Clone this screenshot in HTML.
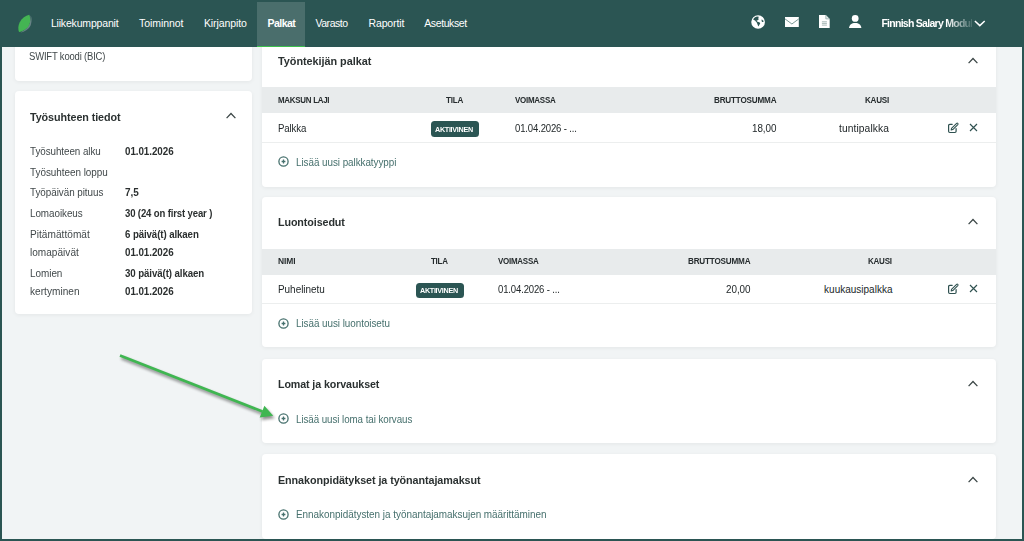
<!DOCTYPE html>
<html><head><meta charset="utf-8"><style>
*{margin:0;padding:0;box-sizing:border-box}
html,body{width:1024px;height:541px;overflow:hidden;background:#f1f4f5;font-family:"Liberation Sans", sans-serif}
.a{position:absolute}
.t{position:absolute;white-space:pre;line-height:normal;font-family:"Liberation Sans", sans-serif}
.card{position:absolute;background:#fff;border-radius:4px;box-shadow:0 1px 4px rgba(0,0,0,0.06)}
.band{position:absolute;background:#e8ebec}
.line{position:absolute;height:1px;background:#eceeee}
.badge{position:absolute;background:#2b5553;border-radius:3.5px}
</style></head><body>
<div class="card" style="left:15px;top:20px;width:237px;height:60.5px"></div>
<div class="card" style="left:15px;top:91.3px;width:237px;height:223px"></div>
<div class="card" style="left:262px;top:36px;width:733.6px;height:150.5px"></div>
<div class="band" style="left:262px;top:87px;width:733.6px;height:26.4px"></div>
<div class="line" style="left:262px;top:142px;width:733.6px"></div>
<div class="badge" style="left:430.5px;top:121.4px;width:48.4px;height:15.5px"></div>
<div class="card" style="left:262px;top:196.8px;width:733.6px;height:150.5px"></div>
<div class="band" style="left:262px;top:248.5px;width:733.6px;height:26.4px"></div>
<div class="line" style="left:262px;top:303px;width:733.6px"></div>
<div class="badge" style="left:415.5px;top:282.6px;width:48.4px;height:15.5px"></div>
<div class="card" style="left:262px;top:358.6px;width:733.6px;height:84.5px"></div>
<div class="card" style="left:262px;top:454.4px;width:733.6px;height:84.2px"></div>
<div class="a" id="hdr" style="left:0;top:0;width:1024px;height:47px;background:#2b5553"></div>
<div class="a" style="left:257px;top:2px;width:48px;height:45px;background:rgba(255,255,255,0.15)"></div>
<div class="a" style="left:257px;top:46px;width:48px;height:1px;background:#3cbf4e"></div>
<svg class="a" style="left:16px;top:13px" width="20" height="21" viewBox="0 0 20 21"><defs><filter id="lf"><feGaussianBlur stdDeviation="0.6"/></filter></defs><path d="M14.6 2.6 C15.8 4.4 16 9 14.6 12.4 C12.6 16.4 8.4 18.8 4.6 19.4 C9 17 12.4 14 13.6 10.4 C14.4 7.8 14.6 5 14.6 2.6 Z" fill="#9aa8b0" opacity="0.55" filter="url(#lf)"/><path d="M13.2 1.8 C14.4 3.6 14.6 8.6 13.2 12 C11.2 16 6.8 18.4 3 19 C2 16.4 2 12.6 3.6 9.4 C5.8 5.2 9.6 2.6 13.2 1.8 Z" fill="#44b553"/></svg>
<span class="t" style="left:50.88px;top:16.99px;font-size:10.5px;font-weight:400;color:#ffffff;letter-spacing:-0.170px">Liikekumppanit</span>
<span class="t" style="left:139.08px;top:16.99px;font-size:10.5px;font-weight:400;color:#ffffff;letter-spacing:-0.077px">Toiminnot</span>
<span class="t" style="left:203.88px;top:16.99px;font-size:10.5px;font-weight:400;color:#ffffff;letter-spacing:-0.082px">Kirjanpito</span>
<span class="t" style="left:267.38px;top:16.99px;font-size:10.5px;font-weight:700;color:#ffffff;letter-spacing:-0.499px">Palkat</span>
<span class="t" style="left:315.38px;top:16.99px;font-size:10.5px;font-weight:400;color:#ffffff;letter-spacing:-0.430px">Varasto</span>
<span class="t" style="left:368.48px;top:16.99px;font-size:10.5px;font-weight:400;color:#ffffff;letter-spacing:-0.132px">Raportit</span>
<span class="t" style="left:424.28px;top:16.99px;font-size:10.5px;font-weight:400;color:#ffffff;letter-spacing:-0.409px">Asetukset</span>
<span class="t" style="left:29.40px;top:51.25px;font-size:10px;font-weight:400;color:#41484a;letter-spacing:-0.193px;transform:scaleX(0.9475);transform-origin:0 0">SWIFT koodi (BIC)</span>
<span class="t" style="left:29.56px;top:110.84px;font-size:11px;font-weight:700;color:#2b3131;letter-spacing:-0.085px;transform:scaleX(0.9787);transform-origin:0 0">Työsuhteen tiedot</span>
<span class="t" style="left:29.60px;top:146.45px;font-size:10px;font-weight:400;color:#41484a;letter-spacing:-0.059px;transform:scaleX(0.9833);transform-origin:0 0">Työsuhteen alku</span>
<span class="t" style="left:124.60px;top:146.45px;font-size:10px;font-weight:700;color:#2b2f2f;letter-spacing:-0.066px;transform:scaleX(0.9825);transform-origin:0 0">01.01.2026</span>
<span class="t" style="left:29.60px;top:166.95px;font-size:10px;font-weight:400;color:#41484a;letter-spacing:-0.031px;transform:scaleX(0.9912);transform-origin:0 0">Työsuhteen loppu</span>
<span class="t" style="left:29.60px;top:187.15px;font-size:10px;font-weight:400;color:#41484a;letter-spacing:-0.045px;transform:scaleX(0.9867);transform-origin:0 0">Työpäivän pituus</span>
<span class="t" style="left:124.60px;top:187.15px;font-size:10px;font-weight:700;color:#2b2f2f;letter-spacing:-0.021px;transform:scaleX(0.9954);transform-origin:0 0">7,5</span>
<span class="t" style="left:29.60px;top:207.75px;font-size:10px;font-weight:400;color:#41484a;letter-spacing:-0.055px;transform:scaleX(0.9864);transform-origin:0 0">Lomaoikeus</span>
<span class="t" style="left:124.60px;top:207.75px;font-size:10px;font-weight:700;color:#2b2f2f;letter-spacing:-0.141px;transform:scaleX(0.9550);transform-origin:0 0">30 (24 on first year )</span>
<span class="t" style="left:29.60px;top:228.95px;font-size:10px;font-weight:400;color:#41484a;letter-spacing:0.032px;transform:scaleX(1.0089);transform-origin:0 0">Pitämättömät</span>
<span class="t" style="left:124.60px;top:228.95px;font-size:10px;font-weight:700;color:#2b2f2f;letter-spacing:-0.104px;transform:scaleX(0.9691);transform-origin:0 0">6 päivä(t) alkaen</span>
<span class="t" style="left:29.60px;top:246.85px;font-size:10px;font-weight:400;color:#41484a;letter-spacing:0.019px;transform:scaleX(1.0055);transform-origin:0 0">lomapäivät</span>
<span class="t" style="left:124.60px;top:246.85px;font-size:10px;font-weight:700;color:#2b2f2f;letter-spacing:-0.066px;transform:scaleX(0.9825);transform-origin:0 0">01.01.2026</span>
<span class="t" style="left:29.60px;top:267.55px;font-size:10px;font-weight:400;color:#41484a;letter-spacing:-0.033px;transform:scaleX(0.9925);transform-origin:0 0">Lomien</span>
<span class="t" style="left:124.60px;top:267.55px;font-size:10px;font-weight:700;color:#2b2f2f;letter-spacing:-0.099px;transform:scaleX(0.9707);transform-origin:0 0">30 päivä(t) alkaen</span>
<span class="t" style="left:29.60px;top:285.55px;font-size:10px;font-weight:400;color:#41484a;letter-spacing:0.031px;transform:scaleX(1.0085);transform-origin:0 0">kertyminen</span>
<span class="t" style="left:124.60px;top:285.55px;font-size:10px;font-weight:700;color:#2b2f2f;letter-spacing:-0.066px;transform:scaleX(0.9825);transform-origin:0 0">01.01.2026</span>
<span class="t" style="left:277.56px;top:55.34px;font-size:11px;font-weight:700;color:#2b3131;letter-spacing:-0.045px;transform:scaleX(0.9882);transform-origin:0 0">Työntekijän palkat</span>
<span class="t" style="left:277.66px;top:94.90px;font-size:8.5px;font-weight:700;color:#262c2e;letter-spacing:-0.279px;transform:scaleX(0.9327);transform-origin:0 0">MAKSUN LAJI</span>
<span class="t" style="left:446.06px;top:94.90px;font-size:8.5px;font-weight:700;color:#262c2e;letter-spacing:-0.212px;transform:scaleX(0.9520);transform-origin:0 0">TILA</span>
<span class="t" style="left:514.56px;top:94.90px;font-size:8.5px;font-weight:700;color:#262c2e;letter-spacing:-0.278px;transform:scaleX(0.9396);transform-origin:0 0">VOIMASSA</span>
<span class="t" style="left:713.86px;top:94.90px;font-size:8.5px;font-weight:700;color:#262c2e;letter-spacing:-0.200px;transform:scaleX(0.9573);transform-origin:0 0">BRUTTOSUMMA</span>
<span class="t" style="left:864.66px;top:94.90px;font-size:8.5px;font-weight:700;color:#262c2e;letter-spacing:-0.229px;transform:scaleX(0.9507);transform-origin:0 0">KAUSI</span>
<span class="t" style="left:277.60px;top:122.95px;font-size:10px;font-weight:400;color:#22282a;letter-spacing:-0.142px;transform:scaleX(0.9657);transform-origin:0 0">Palkka</span>
<span class="t" style="left:435.48px;top:124.66px;font-size:8px;font-weight:700;color:#ffffff;letter-spacing:-0.354px;transform:scaleX(0.9047);transform-origin:0 0">AKTIIVINEN</span>
<span class="t" style="left:514.50px;top:122.95px;font-size:10px;font-weight:400;color:#22282a;letter-spacing:-0.148px;transform:scaleX(0.9529);transform-origin:0 0">01.04.2026 - ...</span>
<span class="t" style="left:752.10px;top:122.95px;font-size:10px;font-weight:400;color:#22282a;letter-spacing:-0.064px;transform:scaleX(0.9849);transform-origin:0 0">18,00</span>
<span class="t" style="left:839.10px;top:122.95px;font-size:10px;font-weight:400;color:#22282a;letter-spacing:0.081px;transform:scaleX(1.0262);transform-origin:0 0">tuntipalkka</span>
<span class="t" style="left:295.60px;top:156.75px;font-size:10px;font-weight:400;color:#46706d;letter-spacing:-0.045px;transform:scaleX(0.9857);transform-origin:0 0">Lisää uusi palkkatyyppi</span>
<span class="t" style="left:277.56px;top:216.34px;font-size:11px;font-weight:700;color:#2b3131;letter-spacing:-0.103px;transform:scaleX(0.9761);transform-origin:0 0">Luontoisedut</span>
<span class="t" style="left:277.66px;top:255.90px;font-size:8.5px;font-weight:700;color:#262c2e;letter-spacing:-0.037px;transform:scaleX(0.9909);transform-origin:0 0">NIMI</span>
<span class="t" style="left:431.36px;top:255.90px;font-size:8.5px;font-weight:700;color:#262c2e;letter-spacing:-0.286px;transform:scaleX(0.9361);transform-origin:0 0">TILA</span>
<span class="t" style="left:497.56px;top:255.90px;font-size:8.5px;font-weight:700;color:#262c2e;letter-spacing:-0.278px;transform:scaleX(0.9396);transform-origin:0 0">VOIMASSA</span>
<span class="t" style="left:687.66px;top:255.90px;font-size:8.5px;font-weight:700;color:#262c2e;letter-spacing:-0.200px;transform:scaleX(0.9573);transform-origin:0 0">BRUTTOSUMMA</span>
<span class="t" style="left:868.36px;top:255.90px;font-size:8.5px;font-weight:700;color:#262c2e;letter-spacing:-0.262px;transform:scaleX(0.9439);transform-origin:0 0">KAUSI</span>
<span class="t" style="left:277.60px;top:283.95px;font-size:10px;font-weight:400;color:#22282a;letter-spacing:-0.021px;transform:scaleX(0.9941);transform-origin:0 0">Puhelinetu</span>
<span class="t" style="left:420.48px;top:285.66px;font-size:8px;font-weight:700;color:#ffffff;letter-spacing:-0.354px;transform:scaleX(0.9047);transform-origin:0 0">AKTIIVINEN</span>
<span class="t" style="left:497.50px;top:283.95px;font-size:10px;font-weight:400;color:#22282a;letter-spacing:-0.148px;transform:scaleX(0.9529);transform-origin:0 0">01.04.2026 - ...</span>
<span class="t" style="left:725.80px;top:283.95px;font-size:10px;font-weight:400;color:#22282a;letter-spacing:-0.054px;transform:scaleX(0.9873);transform-origin:0 0">20,00</span>
<span class="t" style="left:824.10px;top:283.95px;font-size:10px;font-weight:400;color:#22282a;letter-spacing:-0.002px">kuukausipalkka</span>
<span class="t" style="left:295.60px;top:317.75px;font-size:10px;font-weight:400;color:#46706d;letter-spacing:-0.042px;transform:scaleX(0.9864);transform-origin:0 0">Lisää uusi luontoisetu</span>
<span class="t" style="left:277.56px;top:377.64px;font-size:11px;font-weight:700;color:#2b3131;letter-spacing:-0.114px;transform:scaleX(0.9718);transform-origin:0 0">Lomat ja korvaukset</span>
<span class="t" style="left:295.60px;top:413.55px;font-size:10px;font-weight:400;color:#46706d;letter-spacing:-0.068px;transform:scaleX(0.9785);transform-origin:0 0">Lisää uusi loma tai korvaus</span>
<span class="t" style="left:277.56px;top:473.64px;font-size:11px;font-weight:700;color:#2b3131;letter-spacing:-0.080px;transform:scaleX(0.9797);transform-origin:0 0">Ennakonpidätykset ja työnantajamaksut</span>
<span class="t" style="left:295.60px;top:508.95px;font-size:10px;font-weight:400;color:#46706d;letter-spacing:-0.023px;transform:scaleX(0.9929);transform-origin:0 0">Ennakonpidätysten ja työnantajamaksujen määrittäminen</span>
<span class="t" style="left:881.38px;top:16.79px;font-size:10.5px;font-weight:700;color:#ffffff;letter-spacing:-0.725px;-webkit-mask-image:linear-gradient(90deg,#000 0,#000 72%,rgba(0,0,0,0.15) 100%)">Finnish Salary Modul</span>
<svg class="a" style="left:225.0px;top:111.7px" width="12" height="7.5" viewBox="-1 -1 12 7.5"><path d="M0.6 5.1 L5.0 0.5 L9.4 5.1" fill="none" stroke="#3a4545" stroke-width="1.25"/></svg>
<svg class="a" style="left:966.6px;top:57.1px" width="12" height="7.5" viewBox="-1 -1 12 7.5"><path d="M0.6 5.1 L5.0 0.5 L9.4 5.1" fill="none" stroke="#3a4545" stroke-width="1.25"/></svg>
<svg class="a" style="left:966.6px;top:218.3px" width="12" height="7.5" viewBox="-1 -1 12 7.5"><path d="M0.6 5.1 L5.0 0.5 L9.4 5.1" fill="none" stroke="#3a4545" stroke-width="1.25"/></svg>
<svg class="a" style="left:966.6px;top:380.1px" width="12" height="7.5" viewBox="-1 -1 12 7.5"><path d="M0.6 5.1 L5.0 0.5 L9.4 5.1" fill="none" stroke="#3a4545" stroke-width="1.25"/></svg>
<svg class="a" style="left:966.6px;top:475.8px" width="12" height="7.5" viewBox="-1 -1 12 7.5"><path d="M0.6 5.1 L5.0 0.5 L9.4 5.1" fill="none" stroke="#3a4545" stroke-width="1.25"/></svg>
<svg class="a" style="left:277.1px;top:155.45px" width="13" height="13" viewBox="0 0 13 13"><circle cx="6.5" cy="6.5" r="4.6" fill="none" stroke="#46706d" stroke-width="1.3"/><path d="M6.5 4.6V8.4M4.6 6.5H8.4" stroke="#46706d" stroke-width="1.3"/></svg>
<svg class="a" style="left:277.1px;top:316.95px" width="13" height="13" viewBox="0 0 13 13"><circle cx="6.5" cy="6.5" r="4.6" fill="none" stroke="#46706d" stroke-width="1.3"/><path d="M6.5 4.6V8.4M4.6 6.5H8.4" stroke="#46706d" stroke-width="1.3"/></svg>
<svg class="a" style="left:277.1px;top:412.35px" width="13" height="13" viewBox="0 0 13 13"><circle cx="6.5" cy="6.5" r="4.6" fill="none" stroke="#46706d" stroke-width="1.3"/><path d="M6.5 4.6V8.4M4.6 6.5H8.4" stroke="#46706d" stroke-width="1.3"/></svg>
<svg class="a" style="left:277.1px;top:507.55px" width="13" height="13" viewBox="0 0 13 13"><circle cx="6.5" cy="6.5" r="4.6" fill="none" stroke="#46706d" stroke-width="1.3"/><path d="M6.5 4.6V8.4M4.6 6.5H8.4" stroke="#46706d" stroke-width="1.3"/></svg>
<svg class="a" style="left:947px;top:122.2px" width="12" height="12" viewBox="0 0 12 12"><path d="M5.2 2.3H2.8Q1.6 2.3 1.6 3.5V9.3Q1.6 10.5 2.8 10.5H7.9Q9.1 10.5 9.1 9.3V6.6" fill="none" stroke="#2f5150" stroke-width="1.2" stroke-linecap="round"/><path d="M4.2 8 L4.5 6.4 L9.6 1.3 Q10.2 0.8 10.8 1.4 Q11.3 2 10.8 2.6 L5.8 7.6 Z" fill="none" stroke="#2f5150" stroke-width="1.05" stroke-linejoin="round"/></svg>
<svg class="a" style="left:968.8px;top:122.8px" width="9" height="9" viewBox="0 0 9 9"><path d="M1 1L8 8M8 1L1 8" stroke="#2f5150" stroke-width="1.15"/></svg>
<svg class="a" style="left:947px;top:283.2px" width="12" height="12" viewBox="0 0 12 12"><path d="M5.2 2.3H2.8Q1.6 2.3 1.6 3.5V9.3Q1.6 10.5 2.8 10.5H7.9Q9.1 10.5 9.1 9.3V6.6" fill="none" stroke="#2f5150" stroke-width="1.2" stroke-linecap="round"/><path d="M4.2 8 L4.5 6.4 L9.6 1.3 Q10.2 0.8 10.8 1.4 Q11.3 2 10.8 2.6 L5.8 7.6 Z" fill="none" stroke="#2f5150" stroke-width="1.05" stroke-linejoin="round"/></svg>
<svg class="a" style="left:968.8px;top:283.8px" width="9" height="9" viewBox="0 0 9 9"><path d="M1 1L8 8M8 1L1 8" stroke="#2f5150" stroke-width="1.15"/></svg>

<svg class="a" style="left:751.2px;top:14.5px" width="14.2" height="14" viewBox="0 0 14.2 14"><circle cx="7.1" cy="7" r="6.85" fill="#fff"/><path d="M2.2 4.9 C2.4 3.1 4 1.6 6 1.4 L7.8 1.8 C7.4 2.8 7.1 3.6 7.7 4.4 C7.1 5 6.3 5.4 5.5 5.7 C5.6 6.2 6.4 6.6 7.4 6.9 C8.4 7.1 9.1 7.6 9.2 8.2 C8.8 9.4 7.9 10.4 7.3 11.4 C6.7 10 6.2 8.8 5.8 7.6 C5.2 7.2 4.6 6.6 4.4 5.8 C3.8 5.6 3.2 5.3 2.6 4.8 Z M10.6 4.4 C11.6 4.8 12.4 5.6 12.7 6.6 C12.1 7.3 11.2 7.1 10.8 6.4 C10.6 5.8 10.5 5 10.6 4.4 Z" fill="#2b5553"/></svg>
<svg class="a" style="left:785.4px;top:16.7px" width="13.8" height="10" viewBox="0 0 13.8 10"><rect x="0" y="0" width="13.8" height="10" fill="#fff"/><path d="M0 1.9 L6.9 7 L13.8 1.9" fill="none" stroke="#6d8e8c" stroke-width="0.9"/></svg>
<svg class="a" style="left:818.9px;top:15px" width="10.7" height="13.3" viewBox="0 0 10.7 13.3"><path d="M0 0H6.8L10.7 3.9V13.3H0Z" fill="#fff"/><path d="M6.8 0.2V3.9H10.5" fill="#dfe7e7"/><path d="M6.8 0V3.9H10.7" fill="none" stroke="#7f9a99" stroke-width="0.6"/><path d="M2.9 6.8H7.9M2.9 8.4H7.9M2.9 10.1H7.9" stroke="#9db0af" stroke-width="0.9"/></svg>
<svg class="a" style="left:849.2px;top:14.6px" width="12.4" height="13.6" viewBox="0 0 12.4 13.6"><circle cx="6.2" cy="3.4" r="3.4" fill="#fff"/><path d="M0 13.6 C0 10.2 2.4 8 6.2 8 C10 8 12.4 10.2 12.4 13.6 Z" fill="#fff"/></svg>
<svg class="a" style="left:974px;top:19.5px" width="11.6" height="7" viewBox="0 0 11.6 7"><path d="M0.9 1 L5.8 5.6 L10.7 1" fill="none" stroke="#fff" stroke-width="1.5"/></svg>


<svg class="a" style="left:100px;top:340px" width="190" height="95" viewBox="100 340 190 95">
<defs><filter id="sh" x="-20%" y="-40%" width="140%" height="180%"><feGaussianBlur stdDeviation="1.6"/></filter></defs>
<g transform="translate(1.5,2.5)" filter="url(#sh)" opacity="0.45"><path d="M120 355.4 L262.5 411.5" stroke="#000" stroke-width="2.8"/><path d="M273.2 415.8 L264.4 405.8 L259.7 417.4 Z" fill="#000"/></g>
<path d="M120 355.4 L262.5 411.5" stroke="#3fb651" stroke-width="2.7"/><path d="M273.2 415.8 L264.4 405.8 L259.7 417.4 Z" fill="#3fb651"/>
</svg>

<div class="a" style="left:0;top:0;width:2px;height:541px;background:#2b5553"></div>
<div class="a" style="left:1022px;top:0;width:2px;height:541px;background:#2b5553"></div>
<div class="a" style="left:0;top:539px;width:1024px;height:2px;background:#2b5553"></div>
</body></html>
